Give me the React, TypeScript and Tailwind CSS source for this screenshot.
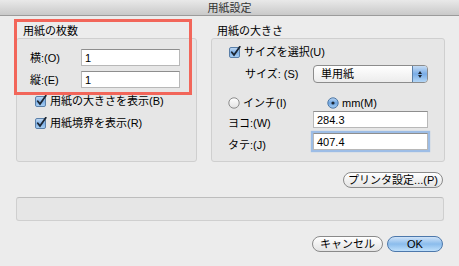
import React from "react";

const font = { fontFamily: '"Liberation Sans", "Noto Sans CJK JP", sans-serif' };

function CheckBox() {
    return (
        <svg width="12" height="12" viewBox="0 0 12 12" className="shrink-0">
            <defs>
                <linearGradient id="cbg" x1="0" y1="0" x2="0" y2="1">
                    <stop offset="0" stopColor="#c5dcf4" />
                    <stop offset="0.5" stopColor="#7fb0e6" />
                    <stop offset="1" stopColor="#a9d0f4" />
                </linearGradient>
            </defs>
            <rect x="0.5" y="1.5" width="10" height="10" rx="1.5" fill="url(#cbg)" stroke="#5a7fa8" />
            <path d="M2.8 6.2 L5 9 L10.8 0.8" fill="none" stroke="#1b2633" strokeWidth="1.8" strokeLinecap="round" />
        </svg>
    );
}

function Radio({ on }: { on?: boolean }) {
    return (
        <svg width="12" height="12" viewBox="0 0 12 12" className="shrink-0">
            <defs>
                <linearGradient id="rOn" x1="0" y1="0" x2="0" y2="1">
                    <stop offset="0" stopColor="#bcd6f2" />
                    <stop offset="0.5" stopColor="#6ea6e2" />
                    <stop offset="1" stopColor="#a6cdf3" />
                </linearGradient>
                <linearGradient id="rOff" x1="0" y1="0" x2="0" y2="1">
                    <stop offset="0" stopColor="#ffffff" />
                    <stop offset="1" stopColor="#e2e2e2" />
                </linearGradient>
            </defs>
            <circle cx="6" cy="6" r="5.2" fill={on ? "url(#rOn)" : "url(#rOff)"} stroke={on ? "#4f78a5" : "#8c8c8c"} />
            {on && <circle cx="6" cy="6" r="1.6" fill="#1b2633" />}
        </svg>
    );
}

function TextInput({ value, focus }: { value: string; focus?: boolean }) {
    return (
        <div
            className={`flex h-[17px] items-center bg-white px-[3px] text-[11px] text-black border border-[#b8b8b8] border-t-[#8e8e8e] ${
                focus ? "shadow-[0_0_1px_2px_#9dbde6]" : ""
            }`}
        >
            {value}
        </div>
    );
}

function PillButton({ label, primary, className = "" }: { label: string; primary?: boolean; className?: string }) {
    return (
        <div
            className={`flex h-[16px] items-center justify-center rounded-full border text-[11px] text-black ${
                primary
                    ? "border-[#4d78ab] bg-gradient-to-b from-[#cfe3f8] via-[#8bbcec] to-[#bfe0fb]"
                    : "border-[#8a8a8a] bg-gradient-to-b from-[#ffffff] via-[#f1f1f1] to-[#e4e4e4]"
            } ${className}`}
        >
            {label}
        </div>
    );
}

export default function App() {
    return (
        <div className="relative h-[266px] w-[459px] overflow-hidden bg-[#ececec] text-[11px] leading-[14px] text-black" style={font}>
            {/* Title bar */}
            <div className="flex h-[16px] items-center justify-center border-b border-[#9b9b9b] bg-gradient-to-b from-[#e9e9e9] to-[#c9c9c9] text-[11px] text-[#333]">
                用紙設定
            </div>

            <div className="flex flex-col px-[16px] pr-[14px]">
                {/* Groups */}
                <div className="mt-[8px] flex gap-[14px]">
                    {/* Left group */}
                    <div className="flex w-[181px] flex-col">
                        <div className="h-[14px] pl-[7px]">用紙の枚数</div>
                        <div className="h-[124px] rounded-[3px] border border-[#cfcfcf] bg-[#e6e6e6]">
                            <div className="mt-[10px] flex items-center pl-[13px]">
                                <span className="w-[51px]">横:(O)</span>
                                <div className="w-[99px]"><TextInput value="1" /></div>
                            </div>
                            <div className="mt-[5px] flex items-center pl-[13px]">
                                <span className="w-[51px]">縦:(E)</span>
                                <div className="w-[99px]"><TextInput value="1" /></div>
                            </div>
                            <div className="mt-[6px] flex h-[14px] items-center gap-[3px] pl-[18px]">
                                <CheckBox />
                                <span>用紙の大きさを表示(B)</span>
                            </div>
                            <div className="mt-[8px] flex h-[14px] items-center gap-[3px] pl-[18px]">
                                <CheckBox />
                                <span>用紙境界を表示(R)</span>
                            </div>
                        </div>
                    </div>

                    {/* Right group */}
                    <div className="flex w-[234px] flex-col">
                        <div className="h-[14px] pl-[6px]">用紙の大きさ</div>
                        <div className="h-[124px] rounded-[3px] border border-[#cfcfcf] bg-[#e6e6e6]">
                            <div className="mt-[6px] flex h-[14px] items-center gap-[3px] pl-[17px]">
                                <CheckBox />
                                <span>サイズを選択(U)</span>
                            </div>
                            <div className="mt-[6px] flex items-center pl-[33px]">
                                <span className="w-[68px]">サイズ: (S)</span>
                                <div className="flex h-[18px] w-[115px] items-center overflow-hidden rounded-[4px] border border-[#8c8c8c] bg-gradient-to-b from-[#ffffff] to-[#ececec]">
                                    <span className="flex-1 pl-[7px]">単用紙</span>
                                    <div className="flex h-full w-[15px] flex-col items-center justify-center gap-[1px] border-l border-[#5a7fa8] bg-gradient-to-b from-[#c5dcf4] via-[#79ace6] to-[#b3d6f6]">
                                        <span className="block h-0 w-0 border-x-[2.5px] border-b-[3px] border-x-transparent border-b-[#1b2633]" />
                                        <span className="block h-0 w-0 border-x-[2.5px] border-t-[3px] border-x-transparent border-t-[#1b2633]" />
                                    </div>
                                </div>
                            </div>
                            <div className="mt-[13px] flex h-[14px] items-center pl-[16px]">
                                <div className="flex w-[99px] items-center gap-[3px]">
                                    <Radio />
                                    <span>インチ(I)</span>
                                </div>
                                <div className="flex items-center gap-[3px]">
                                    <Radio on />
                                    <span>mm(M)</span>
                                </div>
                            </div>
                            <div className="mt-[1px] flex h-[19px] items-start pl-[16px]">
                                <span className="mt-[5px] w-[85px]">ヨコ:(W)</span>
                                <div className="w-[115px]"><TextInput value="284.3" /></div>
                            </div>
                            <div className="mt-[3px] flex h-[19px] items-start pl-[16px]">
                                <span className="mt-[5px] w-[85px]">タテ:(J)</span>
                                <div className="w-[115px]"><TextInput value="407.4" focus /></div>
                            </div>
                        </div>
                    </div>
                </div>

                {/* Printer settings button */}
                <div className="mt-[10px] flex justify-end pr-[2px]">
                    <PillButton label="プリンタ設定...(P)" className="w-[100px]" />
                </div>

                {/* Empty area */}
                <div className="mt-[9px] h-[24px] w-[428px] rounded-[3px] border border-[#cfcfcf] border-t-[#bdbdbd] bg-[#e6e6e6]" />

                {/* Bottom buttons */}
                <div className="mt-[15px] flex justify-end gap-[4px] pr-[2px]">
                    <PillButton label="キャンセル" className="w-[71px]" />
                    <PillButton label="OK" primary className="w-[56px]" />
                </div>
            </div>

            {/* Annotation highlight */}
            <div className="absolute left-[14px] top-[19px] h-[76px] w-[178px] border-[3px] border-[#f2665a]" />
        </div>
    );
}
